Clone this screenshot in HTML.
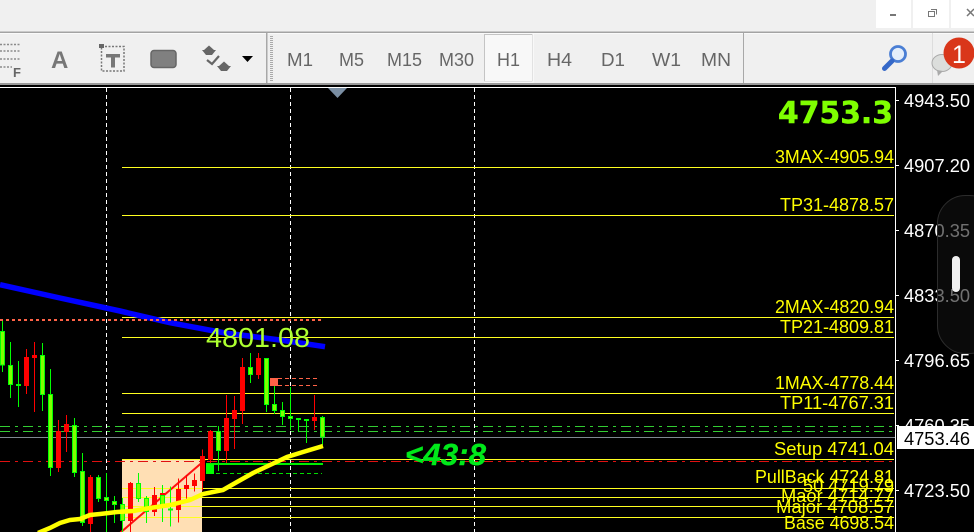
<!DOCTYPE html>
<html>
<head>
<meta charset="utf-8">
<style>
html,body{margin:0;padding:0;background:#000;width:974px;height:532px;overflow:hidden}
svg{display:block}
text{font-family:"Liberation Sans",sans-serif}
.y text{fill:#ffff00;font-size:18.500px;text-anchor:end}
.a text{fill:#fff;font-size:18.500px}
.t text{fill:#666;font-size:18.500px}
.gb rect{width:12px}
.rb rect{width:15px}
</style>
</head>
<body>
<svg width="974" height="532" viewBox="0 0 974 532" xmlns="http://www.w3.org/2000/svg">
<!-- toolbar -->
<rect width="974" height="85" fill="#f0f0f0"/>
<rect x="876" y="0" width="35" height="28" fill="#fff"/>
<rect x="913" y="0" width="36" height="28" fill="#fff"/>
<rect x="951" y="0" width="23" height="28" fill="#fff"/>
<path d="M890 15h6" stroke="#777" stroke-width="2"/>
<path d="M928.500 11.500h6v5h-6zM931 9.500h5.500v5" fill="none" stroke="#777"/>
<path d="M967 9l7 7M974 9l-7 7" stroke="#777" stroke-width="1.500"/>
<rect y="31.500" width="974" height="1.500" fill="#a3a3a3"/>
<rect y="33" width="974" height="1" fill="#fafafa"/>
<rect y="83" width="974" height="2" fill="#9a9a9a"/>

<!-- left tools -->
<g fill="none" stroke="#8a8a8a" stroke-width="1.500" stroke-dasharray="2 1.500">
<path d="M0 44.500h21M0 51h21M0 59h21M0 67h12"/>
</g>
<text x="13" y="77" font-size="13" font-weight="bold" fill="#666">F</text>
<text x="51" y="68" font-size="24" font-weight="bold" fill="#777">A</text>
<rect x="101.500" y="46.500" width="22.500" height="24.500" fill="none" stroke="#777" stroke-width="1.500" stroke-dasharray="2 1.500"/>
<rect x="99" y="44" width="5" height="4" fill="#666"/>
<path d="M106 54h14v3.500h-5v10h-4v-10h-5z" fill="#777"/>
<rect x="151" y="50.500" width="25" height="17" rx="3" fill="#808080" stroke="#666" stroke-width="1.500"/>
<path d="M209 45.500L214 50H216L212 55H206L202 50H204Z" fill="#666"/>
<path d="M224 61.500L229 66H231L227 71H221L217 66H219Z" fill="#666"/>
<path d="M207 60l5 4 7-8" fill="none" stroke="#666" stroke-width="2.200"/>
<path d="M242 56h11l-5.500 6z" fill="#000"/>
<rect x="266" y="33" width="1.500" height="50" fill="#a8a8a8"/>
<path d="M271.500 36V81" stroke="#aaa" stroke-width="3" stroke-dasharray="1 1"/>
<rect x="743" y="33" width="1" height="50" fill="#a8a8a8"/>
<rect x="932" y="33" width="1" height="50" fill="#ddd"/>

<!-- timeframes -->
<rect x="484.500" y="34.500" width="48" height="47" fill="#f8f8f8" stroke="#c4c4c4"/>
<path d="M533 34V82H484" fill="none" stroke="#fff"/>
<g class="t">
<text x="287" y="66" textLength="26" lengthAdjust="spacingAndGlyphs">M1</text>
<text x="339" y="66" textLength="25" lengthAdjust="spacingAndGlyphs">M5</text>
<text x="387" y="66" textLength="35" lengthAdjust="spacingAndGlyphs">M15</text>
<text x="439" y="66" textLength="35" lengthAdjust="spacingAndGlyphs">M30</text>
<text x="497" y="66" textLength="23" lengthAdjust="spacingAndGlyphs">H1</text>
<text x="547" y="66" textLength="25" lengthAdjust="spacingAndGlyphs">H4</text>
<text x="601" y="66" textLength="24" lengthAdjust="spacingAndGlyphs">D1</text>
<text x="652" y="66" textLength="29" lengthAdjust="spacingAndGlyphs">W1</text>
<text x="701" y="66" textLength="30" lengthAdjust="spacingAndGlyphs">MN</text>
</g>

<!-- search -->
<circle cx="898" cy="54" r="7.500" fill="#e4eefa" stroke="#4a7ed4" stroke-width="2.800"/>
<path d="M892 61L884.500 68.500" stroke="#3568c8" stroke-width="5" stroke-linecap="round"/>
<!-- chat and badge -->
<ellipse cx="942" cy="63" rx="10" ry="8.500" fill="#dcdedc" stroke="#aaa"/>
<path d="M937 70l1 6 5-5z" fill="#aaa"/>
<circle cx="959" cy="53" r="15.500" fill="#d9361a"/>
<text x="959" y="63" font-size="25" fill="#fff" text-anchor="middle">1</text>

<!-- chart area -->
<rect y="85" width="974" height="447" fill="#000"/>
<rect y="87" width="896" height="1" fill="#fff"/>
<rect x="895" y="87" width="1" height="445" fill="#fff"/>

<g shape-rendering="crispEdges">
<rect x="122" y="459" width="80" height="73" fill="#ffdfb4"/>
<path d="M0 426.500H895M0 431.500H895" stroke="#32cd32" stroke-dasharray="10 5 3 5"/>
<rect y="437" width="895" height="1" fill="#7f8890"/>
<path d="M0 461.500H895" stroke="#e01010" stroke-dasharray="10 5 3 5"/>
<path d="M106.500 88V532M290.500 88V532M474.500 88V532" stroke="#fff" stroke-dasharray="4 3"/>
<g fill="#ffff20">
<rect x="122" y="167" width="772" height="1"/>
<rect x="122" y="215" width="772" height="1"/>
<rect x="122" y="317" width="772" height="1"/>
<rect x="122" y="337" width="772" height="1"/>
<rect x="122" y="393" width="772" height="1"/>
<rect x="122" y="413" width="772" height="1"/>
<rect x="122" y="459" width="772" height="1"/>
<rect x="122" y="488" width="772" height="1"/>
<rect x="122" y="497" width="772" height="1"/>
<rect x="122" y="506" width="772" height="1"/>
<rect x="122" y="517" width="772" height="1"/>
</g>
</g>

<path d="M120 533L205 460" stroke="#ff1010" stroke-width="2"/>
<path d="M0 284.700L60 298 120 311 170 322.700 225 333 280 340 325 346.700" fill="none" stroke="#0000ff" stroke-width="5.500"/>
<path d="M0 320H322" stroke="#ff6347" stroke-width="2" stroke-dasharray="3 3"/>

<!-- candles left -->
<g transform="translate(0 310) scale(.33333)" shape-rendering="crispEdges">
<g transform="translate(.5 0)">
<path d="M79 117V252M103 96V306M175 330V486M199 315V426M271 495V666M391 516V666M463 531V618" stroke="#ff0000" stroke-width="3" fill="none"/>
<path d="M7 33V186M31 96V264M55 153V291M127 99V303M151 177V498M223 324V501M247 429V648M295 495V576M319 489V666M343 558V639M367 564V666M415 489V576M439 558V639M487 525V636M511 530V650" stroke="#00ff00" stroke-width="3" fill="none"/>
</g>
<g class="rb" fill="#ff0000">
<rect x="72" y="141" width="15" height="87"/>
<rect x="96" y="135" width="15" height="9"/>
<rect x="168" y="363" width="15" height="111"/>
<rect x="192" y="342" width="15" height="24"/>
<rect x="264" y="501" width="15" height="141"/>
<rect x="384" y="519" width="15" height="114"/>
<rect x="456" y="555" width="15" height="51"/>
<rect x="480" y="549" width="15" height="30"/>
</g>
<g class="gb" fill="#7fff00" stroke="#00ff00" stroke-width="3">
<rect x="1.500" y="64.500" width="12" height="101"/>
<rect x="25.500" y="166.500" width="12" height="57"/>
<rect x="49.500" y="223.500" width="12" height="3"/>
<rect x="121.500" y="136.500" width="12" height="117"/>
<rect x="145.500" y="253.500" width="12" height="219"/>
<rect x="217.500" y="346.500" width="12" height="141"/>
<rect x="241.500" y="484.500" width="12" height="153"/>
<rect x="289.500" y="502.500" width="12" height="63"/>
<rect x="313.500" y="562.500" width="12" height="9"/>
<rect x="337.500" y="574.500" width="12" height="9"/>
<rect x="361.500" y="583.500" width="12" height="48"/>
<rect x="409.500" y="520.500" width="12" height="45"/>
<rect x="433.500" y="565.500" width="12" height="39"/>
<rect x="481.500" y="556.500" width="12" height="36"/>
<rect x="505.500" y="596.500" width="12" height="3"/>
</g>
</g>

<!-- candles right -->
<g transform="translate(170 310) scale(.33333)" shape-rendering="crispEdges">
<g transform="translate(.5 0)">
<path d="M25 505V638M49 495V565M73 490V545M97 418V542M121 360V460M169 255V460M193 258V417M217 144V342M265 129V207M433 255V360" stroke="#ff0000" stroke-width="3" fill="none"/>
<path d="M145 348V483M241 129V219M289 144V306M313 225V312M337 276V345M361 231V360M385 324V366M409 327V399M457 318V405" stroke="#00ff00" stroke-width="3" fill="none"/>
</g>
<g class="rb" fill="#ff0000">
<rect x="18" y="537" width="15" height="63"/>
<rect x="42" y="525" width="15" height="12"/>
<rect x="66" y="510" width="15" height="18"/>
<rect x="90" y="438" width="15" height="75"/>
<rect x="114" y="363" width="15" height="87"/>
<rect x="162" y="324" width="15" height="99"/>
<rect x="186" y="300" width="15" height="27"/>
<rect x="210" y="171" width="15" height="132"/>
<rect x="258" y="144" width="15" height="51"/>
<rect x="426" y="321" width="15" height="12"/>
</g>
<g class="gb" fill="#7fff00" stroke="#00ff00" stroke-width="3">
<rect x="139.500" y="364.500" width="12" height="57"/>
<rect x="235.500" y="172.500" width="12" height="21"/>
<rect x="283.500" y="145.500" width="12" height="138"/>
<rect x="307.500" y="283.500" width="12" height="18"/>
<rect x="331.500" y="301.500" width="12" height="18"/>
<rect x="355.500" y="319.500" width="12" height="6"/>
<rect x="379.500" y="325.500" width="12" height="3"/>
<rect x="403.500" y="328.500" width="12" height="3"/>
<rect x="451.500" y="322.500" width="12" height="59"/>
</g>
</g>

<!-- order markers -->
<g shape-rendering="crispEdges">
<rect x="206" y="463" width="117" height="2" fill="#00ee00"/>
<rect x="206" y="464" width="8" height="10" fill="#00ff00"/>
<path d="M216 473.500H322" stroke="#00dd00" stroke-dasharray="4 3"/>
<rect x="270" y="378" width="8" height="8" fill="#ff6347"/>
<path d="M278 378.500H320M278 385.500H320" stroke="#ff6347" stroke-dasharray="4 3"/>
</g>

<!-- MA -->
<path d="M38 533L50 528 60 523 70 520 80 519 90 515 100 514 117 512 133 511 150 508 170 505 190 500 203 494 223 490 237 482 253 473 270 465 287 457 303 452 323 446" fill="none" stroke="#ffff00" stroke-width="4.500"/>

<!-- triangle -->
<path d="M328 88h19l-9.500 10z" fill="#7a8ea3"/>

<!-- labels -->
<text x="778" y="123" font-size="30" font-weight="bold" fill="#7fff00" stroke="#7fff00" stroke-width=".5" textLength="115" lengthAdjust="spacingAndGlyphs" style="font-family:'DejaVu Sans',sans-serif">4753.3</text>
<text x="206" y="347" font-size="28" fill="#adff2f" textLength="104" lengthAdjust="spacingAndGlyphs">4801.08</text>
<text x="405" y="465" font-size="31" font-weight="bold" font-style="italic" fill="#00e81a" stroke="#00e81a" stroke-width=".4" textLength="81" lengthAdjust="spacingAndGlyphs">&lt;43:8</text>

<g class="y">
<text x="894" y="163" textLength="119" lengthAdjust="spacingAndGlyphs">3MAX-4905.94</text>
<text x="894" y="211" textLength="114" lengthAdjust="spacingAndGlyphs">TP31-4878.57</text>
<text x="894" y="313" textLength="119" lengthAdjust="spacingAndGlyphs">2MAX-4820.94</text>
<text x="894" y="333" textLength="114" lengthAdjust="spacingAndGlyphs">TP21-4809.81</text>
<text x="894" y="389" textLength="119" lengthAdjust="spacingAndGlyphs">1MAX-4778.44</text>
<text x="894" y="409" textLength="114" lengthAdjust="spacingAndGlyphs">TP11-4767.31</text>
<text x="894" y="455" textLength="120" lengthAdjust="spacingAndGlyphs">Setup 4741.04</text>
<text x="894" y="483" textLength="139" lengthAdjust="spacingAndGlyphs">PullBack 4724.81</text>
<text x="894" y="492" textLength="91" lengthAdjust="spacingAndGlyphs">50 4719.79</text>
<text x="894" y="502" textLength="113" lengthAdjust="spacingAndGlyphs">Maor 4714.77</text>
<text x="894" y="513" textLength="118" lengthAdjust="spacingAndGlyphs">Major 4708.57</text>
<text x="894" y="529" textLength="110" lengthAdjust="spacingAndGlyphs">Base 4698.54</text>
</g>

<!-- axis -->
<path d="M896 100.500h3M896 165.500h3M896 230.500h3M896 295.500h3M896 360.500h3M896 425.500h3M896 490.500h3" stroke="#fff"/>
<g class="a">
<text x="904" y="107" textLength="66" lengthAdjust="spacingAndGlyphs">4943.50</text>
<text x="904" y="172" textLength="66" lengthAdjust="spacingAndGlyphs">4907.20</text>
<text x="904" y="237" textLength="66" lengthAdjust="spacingAndGlyphs">4870.35</text>
<text x="904" y="302" textLength="66" lengthAdjust="spacingAndGlyphs">4833.50</text>
<text x="904" y="367" textLength="66" lengthAdjust="spacingAndGlyphs">4796.65</text>
<text x="904" y="432" textLength="66" lengthAdjust="spacingAndGlyphs">4760.35</text>
<text x="904" y="497" textLength="66" lengthAdjust="spacingAndGlyphs">4723.50</text>
</g>
<rect x="897" y="426" width="77" height="23" fill="#fff"/>
<text x="904" y="445" font-size="18.500" fill="#000" textLength="66" lengthAdjust="spacingAndGlyphs">4753.46</text>

<!-- scroller overlay -->
<rect x="937.500" y="195.500" width="60" height="158" rx="28" fill="#111" fill-opacity=".6" stroke="#2c2c2c"/>
<rect x="952" y="256" width="8" height="36" rx="4" fill="#f0f0f0"/>
</svg>
</body>
</html>
